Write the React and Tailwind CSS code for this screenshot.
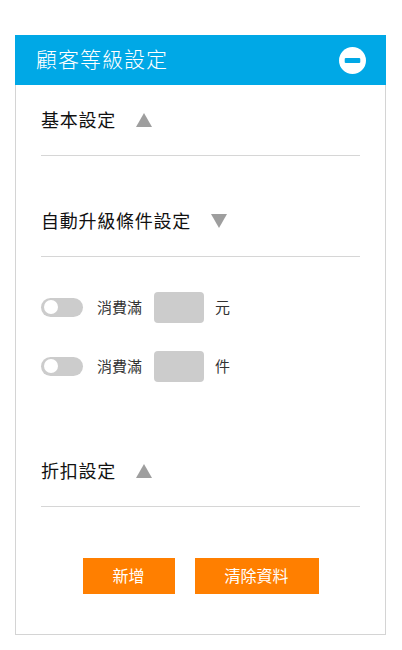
import React, { useState } from "react";

const font = { fontFamily: '"Noto Sans", "Noto Sans CJK TC", sans-serif' };

function Triangle({ up }) {
  return (
    <svg width="16" height="14" viewBox="0 0 16 14" className="ml-5">
      {up ? <polygon points="8,0 16,14 0,14" fill="#9e9e9e" /> : <polygon points="0,0 16,0 8,14" fill="#9e9e9e" />}
    </svg>
  );
}

function SectionTitle({ title, up, className = "" }) {
  return (
    <div className={`h-[71px] flex items-center border-b border-[#d6d6d6] ${className}`}>
      <span className="text-[18px] font-normal text-[#111] tracking-[0.75px]">{title}</span>
      <Triangle up={up} />
    </div>
  );
}

function ToggleRow({ unit, className = "" }) {
  const [on, setOn] = useState(false);
  return (
    <div className={`flex items-center h-[30px] ${className}`}>
      <button
        onClick={() => setOn((v) => !v)}
        className="w-[42px] h-[19px] rounded-full bg-[#cccccc] flex items-center px-[3px]"
      >
        <span className="w-[14px] h-[14px] rounded-full bg-white block" />
      </button>
      <span className="ml-[14px] text-[15px] text-[#333]">消費滿</span>
      <div className="ml-[12px] w-[50px] h-[31px] rounded-[4px] bg-[#cccccc]" />
      <span className="ml-[11px] text-[15px] text-[#333]">{unit}</span>
    </div>
  );
}

export default function App() {
  return (
    <div className="bg-white min-h-[650px] pt-[35px] px-[15px]" style={font}>
      <div className="w-[371px] border border-[#d4d4d4] border-t-0">
        <div className="h-[50px] -mx-px bg-[#00a8e6] flex items-center justify-between pl-[21px] pr-[20px]">
          <span className="text-white text-[21px] font-light tracking-[1px]">顧客等級設定</span>
          <svg width="27" height="27" viewBox="0 0 26 26">
            <circle cx="13" cy="13" r="13" fill="#fff" />
            <rect x="5.5" y="10.5" width="15" height="5" rx="1" fill="#00a8e6" />
          </svg>
        </div>
        <div className="px-[25px] pb-[40px]">
          <SectionTitle title="基本設定" up />
          <SectionTitle title="自動升級條件設定" className="mt-[30px]" />
          <ToggleRow unit="元" className="mt-[35px]" />
          <ToggleRow unit="件" className="mt-[29px]" />
          <SectionTitle title="折扣設定" up className="mt-[55px]" />
          <div className="mt-[51px] flex justify-center gap-[20px]">
            <button className="w-[92px] h-[36px] bg-[#ff7f00] text-white text-[16px]">新增</button>
            <button className="w-[124px] h-[36px] bg-[#ff7f00] text-white text-[16px]">清除資料</button>
          </div>
        </div>
      </div>
    </div>
  );
}
